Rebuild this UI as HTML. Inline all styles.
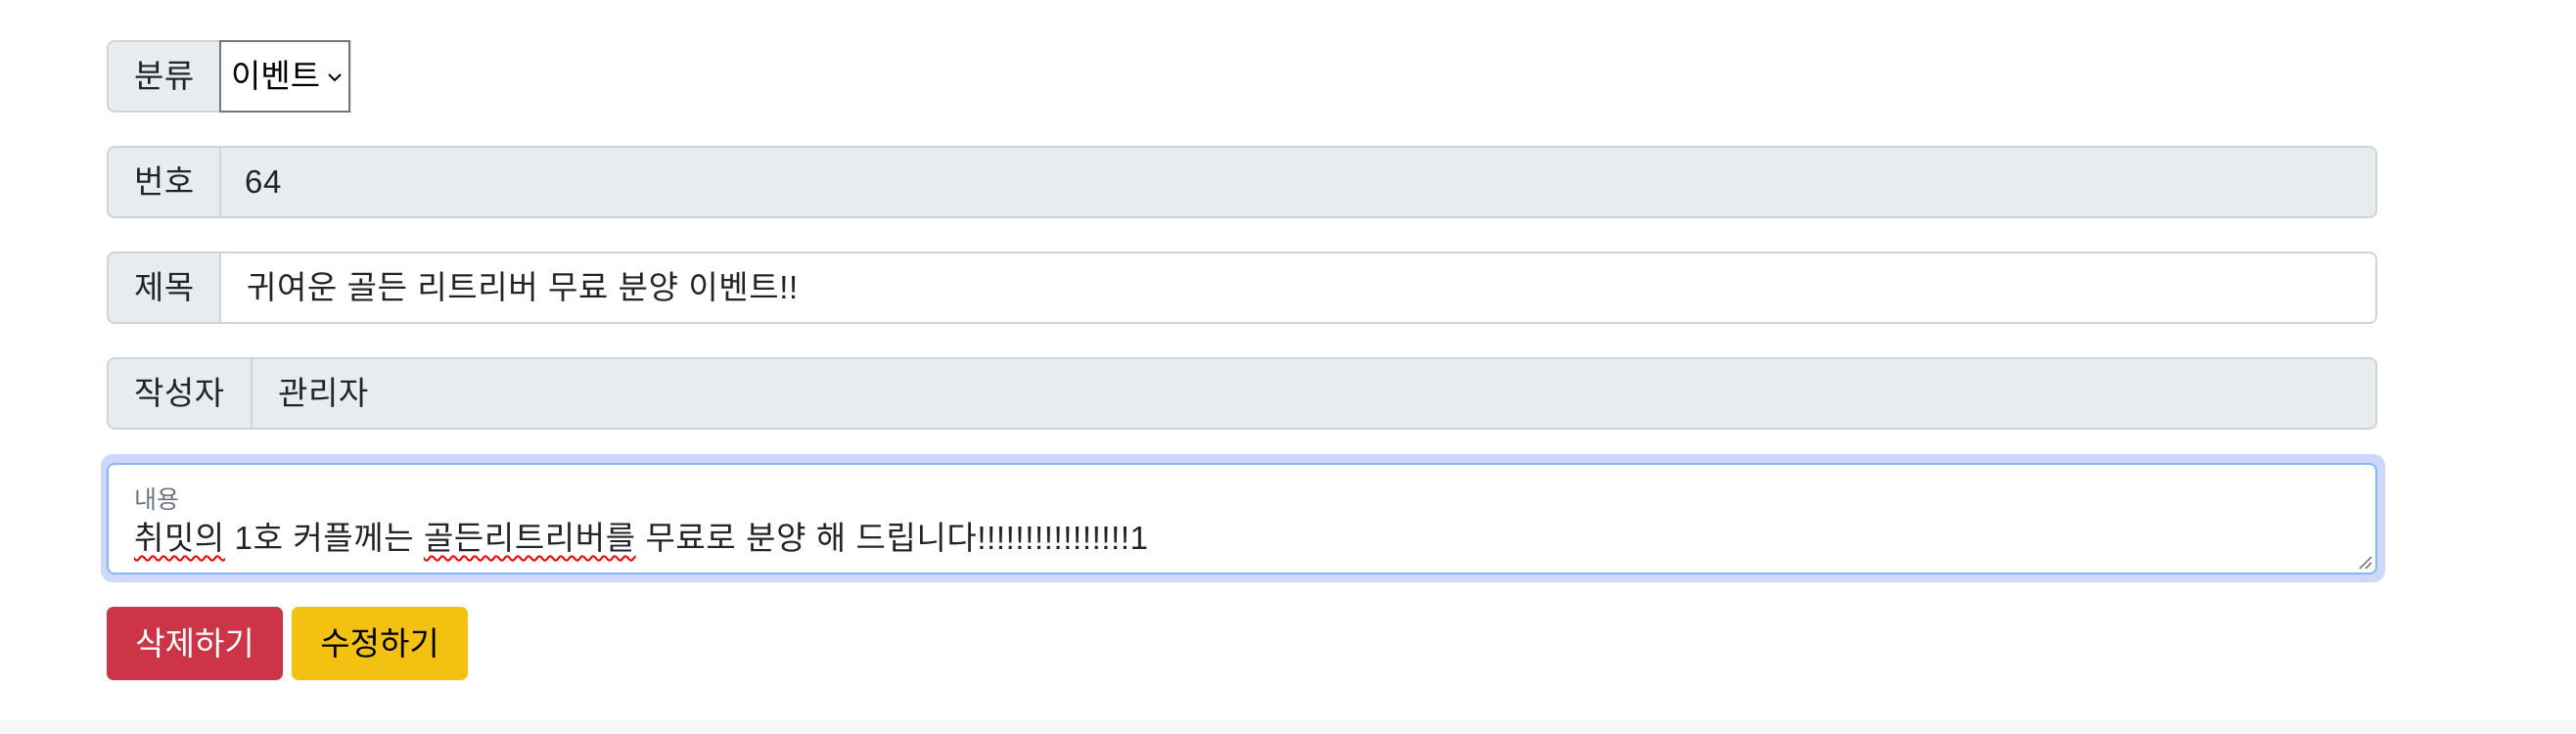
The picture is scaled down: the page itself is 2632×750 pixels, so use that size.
<!DOCTYPE html>
<html><head><meta charset="utf-8"><style>
body{margin:0;width:2632px;height:750px;background:#fff;position:relative;overflow:hidden;font-family:"Liberation Sans","Noto Sans CJK KR","NanumGothic",sans-serif;color:#212529}
.g{position:absolute;left:109px;width:2320px;height:74px;box-sizing:border-box;border:2px solid #ced4da;border-radius:8px;background:#e9ecef}
.lab{position:absolute;left:0;top:0;bottom:0;border-right:2px solid #ced4da;font-size:33px;line-height:70px;padding-left:26px;box-sizing:border-box;letter-spacing:0.5px}
.val{position:absolute;top:0;bottom:0;font-size:33px;line-height:70px;letter-spacing:0.6px;white-space:nowrap}
.btn{position:absolute;top:620px;height:75px;border-radius:7px;font-size:33px;line-height:75px;text-align:center}
.sp{text-decoration:underline wavy #e00;text-decoration-thickness:1.5px;text-underline-offset:6px}
</style></head><body>
<div class="g" style="top:41px;width:250px;border-right:none;border-radius:8px 0 0 8px">
 <div class="lab" style="width:115px;border-right:none">분류</div>
</div>
<div style="position:absolute;left:224px;top:41px;width:134px;height:74px;box-sizing:border-box;border:2px solid #767676;background:#fff;font-size:33px;line-height:70px;padding-left:10px;color:#000;white-space:nowrap">이벤트<svg style="position:absolute;right:6px;top:30px" width="16" height="12"><path d="M2 3L8 9L14 3" stroke="#000" stroke-width="2" fill="none"/></svg></div>

<div class="g" style="top:149px"><div class="lab" style="width:115px">번호</div><div class="val" style="left:139px">64</div></div>
<div class="g" style="top:257px"><div class="lab" style="width:115px">제목</div><div style="position:absolute;left:115px;top:0;right:0;bottom:0;background:#fff;border-radius:0 6px 6px 0"></div><div class="val" style="left:141px">귀여운 골든 리트리버 무료 분양 이벤트!!</div></div>
<div class="g" style="top:365px"><div class="lab" style="width:147px">작성자</div><div class="val" style="left:173px">관리자</div></div>

<div style="position:absolute;left:103px;top:464px;width:2334px;height:131px;border-radius:12px;background:#cdd9fc"></div>
<div style="position:absolute;left:109px;top:473px;width:2320px;height:114px;box-sizing:border-box;border:2px solid #86b7fe;border-radius:8px;background:#fff">
 <div style="position:absolute;left:26px;top:16px;font-size:25px;color:#6c757d">내용</div>
 <div style="position:absolute;left:26px;top:48px;font-size:33px;letter-spacing:0.6px;white-space:nowrap"><span class="sp">취밋의</span> 1호 커플께는 <span class="sp">골든리트리버를</span> 무료로 분양 해 드립니다!!!!!!!!!!!!!!!!1</div>
 <svg style="position:absolute;right:2px;bottom:2px" width="16" height="16"><path d="M2 14L14 2M8 14L14 8" stroke="#666" stroke-width="1.5"/></svg>
</div>

<div class="btn" style="left:109px;width:180px;background:#cc3547;color:#fff">삭제하기</div>
<div class="btn" style="left:298px;width:180px;background:#f2c112;color:#000">수정하기</div>
<div style="position:absolute;left:0;top:736px;width:2632px;height:14px;background:#f8f8f8"></div>
</body></html>
